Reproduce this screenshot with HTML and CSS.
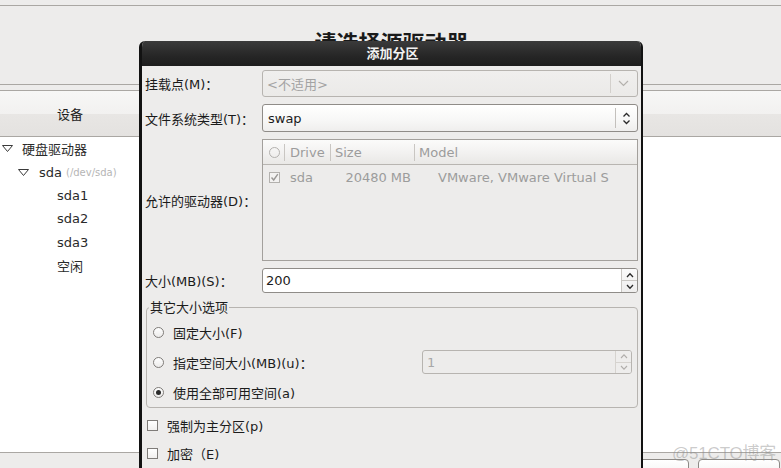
FILE: index.html
```html
<!DOCTYPE html>
<html lang="zh-CN">
<head>
<meta charset="utf-8">
<title>添加分区</title>
<link rel="stylesheet" href="styles.css">
</head>
<body>
<div class="page">
  <div class="topline"></div>
  <div class="heading">请选择源驱动器</div>
  <div class="tree">
    <div class="tree-head"><div class="col-device">设备</div></div>
    <div class="tree-body">
      <div class="row lvl0"><svg class="tri" width="11" height="7" viewBox="0 0 11 7"><path d="M0.5 0.5 H10.5 L5.5 6.5 Z" fill="none" stroke="#3a3a3a" stroke-width="1"/></svg><span>硬盘驱动器</span></div>
      <div class="row lvl1"><svg class="tri" width="11" height="7" viewBox="0 0 11 7"><path d="M0.5 0.5 H10.5 L5.5 6.5 Z" fill="none" stroke="#3a3a3a" stroke-width="1"/></svg><span>sda</span><span class="devpath">(/dev/sda)</span></div>
      <div class="row lvl2">sda1</div>
      <div class="row lvl2">sda2</div>
      <div class="row lvl2">sda3</div>
      <div class="row lvl2">空闲</div>
    </div>
  </div>
  <div class="buttons">
    <div class="btn b1">返回(B)</div>
    <div class="btn b2">下一步(N)</div>
  </div>
</div>

<div class="watermark">@51CTO博客</div>

<div class="dialog">
  <div class="titlebar">添加分区</div>
  <div class="dbody">
    <div class="form">
      <div class="lbl">挂载点(M)：</div>
      <div class="combo is-disabled">
        <span class="ctext">&lt;不适用&gt;</span>
        <span class="cbtn wide"><svg width="11" height="7" viewBox="0 0 11 7"><path d="M1 1 L5.5 5.5 L10 1" fill="none" stroke="#b4b1ad" stroke-width="1.2"/></svg></span>
      </div>

      <div class="lbl">文件系统类型(T)：</div>
      <div class="combo">
        <span class="ctext">swap</span>
        <span class="cbtn"><svg width="9" height="13" viewBox="0 0 9 13"><path d="M1.5 4.5 L4.5 1.5 L7.5 4.5" fill="none" stroke="#2a2a2a" stroke-width="1.3"/><path d="M1.5 8.5 L4.5 11.5 L7.5 8.5" fill="none" stroke="#2a2a2a" stroke-width="1.3"/></svg></span>
      </div>

      <div class="lbl">允许的驱动器(D)：</div>
      <div class="drives">
        <div class="dhead">
          <div class="hc c0"><span class="hcircle"></span></div>
          <div class="hc c1">Drive</div>
          <div class="hc c2">Size</div>
          <div class="hc c3">Model</div>
        </div>
        <div class="drow">
          <div class="dc c0"><span class="dcheck"><svg width="9" height="9" viewBox="0 0 9 9"><path d="M1.5 4.5 L3.7 7 L7.8 1.2" fill="none" stroke="#9a9896" stroke-width="1.4"/></svg></span></div>
          <div class="dc c1">sda</div>
          <div class="dc c2 num">20480 MB</div>
          <div class="dc c3 model">VMware, VMware Virtual S</div>
        </div>
      </div>

      <div class="lbl">大小(MB)(S)：</div>
      <div class="spin">
        <span class="stext">200</span>
        <span class="sbtns">
          <span class="sb"><svg width="8" height="6" viewBox="0 0 8 6"><path d="M1 5 L4 1.8 L7 5" fill="none" stroke="#2a2a2a" stroke-width="1.3"/></svg></span>
          <span class="sb"><svg width="8" height="6" viewBox="0 0 8 6"><path d="M1 1 L4 4.2 L7 1" fill="none" stroke="#2a2a2a" stroke-width="1.3"/></svg></span>
        </span>
      </div>
    </div>

    <fieldset class="opts">
      <legend>其它大小选项</legend>
      <div class="opt"><span class="radio"></span><span>固定大小(F)</span></div>
      <div class="opt">
        <span class="radio"></span><span>指定空间大小(MB)(u)：</span>
        <div class="spin small is-disabled">
          <span class="stext mono">1</span>
          <span class="sbtns">
            <span class="sb"><svg width="8" height="6" viewBox="0 0 8 6"><path d="M1 5 L4 1.8 L7 5" fill="none" stroke="#b0adaa" stroke-width="1.1"/></svg></span>
            <span class="sb"><svg width="8" height="6" viewBox="0 0 8 6"><path d="M1 1 L4 4.2 L7 1" fill="none" stroke="#b0adaa" stroke-width="1.1"/></svg></span>
          </span>
        </div>
      </div>
      <div class="opt"><span class="radio on"></span><span>使用全部可用空间(a)</span></div>
    </fieldset>

    <div class="check first"><span class="box"></span><span>强制为主分区(p)</span></div>
    <div class="check"><span class="box"></span><span>加密（E)</span></div>
  </div>
</div>
</body>
</html>
```

FILE: styles.css
```css
html, body {
  margin: 0;
  padding: 0;
  width: 781px;
  height: 468px;
  overflow: hidden;
}

body {
  position: relative;
  background: #edeceb;
  font-family: "DejaVu Sans", "Noto Sans CJK SC", sans-serif;
  font-size: 13px;
  color: #1c1c1c;
}

.page {
  height: 468px;
  overflow: hidden;
}

.topline {
  height: 5px;
  border-bottom: 1px solid #aaa7a3;
}

.heading {
  height: 53px;
  padding-top: 25px;
  border-bottom: 1px solid #aaa7a3;
  text-align: center;
  font-size: 22px;
  line-height: 26px;
  font-weight: bold;
  color: #1a1a1a;
  padding-left: 2px;
}

.tree {
  margin-top: 5px;
  border-top: 1px solid #aaa7a3;
}

.tree-head {
  height: 45px;
  border-bottom: 1px solid #aaa7a3;
  background: linear-gradient(#f7f7f6 0%, #f2f1f0 50%, #e8e6e4 51%, #e4e2e0 100%);
  display: flex;
  align-items: center;
}

.col-device {
  width: 140px;
  text-align: center;
}

.tree-body {
  height: 315px;
  background: #ffffff;
  border-bottom: 1px solid #aaa7a3;
  padding-top: 0;
}

.row {
  height: 23.4px;
  display: flex;
  align-items: center;
  color: #2a2a2a;
}

.tri {
  flex: none;
  margin-right: 9px;
}

.lvl0 { padding-left: 2px; }
.lvl1 { padding-left: 18px; }
.lvl1 .tri { margin-right: 10px; }
.lvl2 { padding-left: 57px; }

.devpath {
  font-size: 10px;
  color: #b5b5b5;
  margin-left: 4px;
  margin-top: 1px;
}

.buttons {
  display: flex;
  justify-content: flex-end;
  gap: 9px;
  padding: 6px 1px 0 0;
}

.btn {
  height: 30px;
  box-sizing: border-box;
  border: 1px solid #8d8a86;
  border-radius: 4px;
  background: linear-gradient(#ffffff, #ebe9e7);
  display: flex;
  align-items: center;
  justify-content: center;
  padding-top: 14px;
}

.b1 { width: 91px; }
.b2 { width: 82px; }

.watermark {
  position: absolute;
  left: 672px;
  top: 439px;
  font-family: "Liberation Sans", "Noto Sans CJK SC", sans-serif;
  font-size: 17px;
  color: rgba(140, 140, 140, 0.45);
  letter-spacing: -0.2px;
}

/* dialog window */
.dialog {
  position: absolute;
  left: 139px;
  top: 41px;
  width: 499px;
  height: 440px;
  border-left: 3px solid #121212;
  border-right: 2px solid #121212;
  border-radius: 6px 6px 0 0;
  background: #edeceb;
  overflow: hidden;
}

.titlebar {
  height: 25px;
  background: linear-gradient(#3b3b3b, #262626 60%, #1d1d1d);
  color: #f2f2f2;
  font-weight: bold;
  font-size: 13px;
  line-height: 25px;
  text-align: center;
  padding-left: 2px;
}

.dbody {
  padding: 4px 3px 0 3px;
}

.form {
  display: grid;
  grid-template-columns: 117px 1fr;
  grid-template-rows: 27px 28px 122px 25px;
  row-gap: 7px;
}

.lbl {
  display: flex;
  align-items: center;
  white-space: nowrap;
  color: #1a1a1a;
}

.combo {
  display: flex;
  align-items: stretch;
  box-sizing: border-box;
  border: 1px solid #8f8c88;
  border-radius: 3px;
  background: linear-gradient(#ffffff, #f7f7f6 60%, #efeeed);
}

.combo.is-disabled {
  border-color: #b7b4b0;
  background: linear-gradient(#f0efee, #ebeae8);
  color: #a3a3a3;
}

.ctext {
  flex: 1;
  display: flex;
  align-items: center;
  padding-left: 5px;
}

.combo.is-disabled .ctext {
  padding-left: 4px;
}

.cbtn {
  width: 22px;
  display: flex;
  align-items: center;
  justify-content: center;
  position: relative;
}

.cbtn::before {
  content: "";
  position: absolute;
  left: 0;
  top: 3px;
  bottom: 3px;
  border-left: 1px solid #c3c0bc;
}

.cbtn.wide {
  width: 27px;
}

.combo.is-disabled .cbtn::before {
  border-left-color: #d3d0cc;
}

/* drives list */
.drives {
  box-sizing: border-box;
  border: 1px solid #a3a09c;
  background: #edeceb;
  color: #9c9c9c;
}

.dhead {
  display: flex;
  height: 24px;
  border-bottom: 1px solid #b8b5b1;
  background: linear-gradient(#fbfbfa, #f3f2f1 50%, #e9e8e6);
}

.hc {
  display: flex;
  align-items: center;
  margin: 4px 0 3px;
  border-right: 1px solid #c9c6c2;
}

.c0 { width: 21px; justify-content: center; }
.c1 { width: 40px; padding-left: 5px; }
.c2 { width: 79px; padding-left: 4px; }
.c3 { flex: 1; padding-left: 4px; border-right: none; }

.hcircle {
  width: 9px;
  height: 9px;
  border: 1px solid #b3b1ae;
  border-radius: 50%;
  margin-left: 1px;
}

.drow {
  display: flex;
  height: 24px;
}

.dc {
  display: flex;
  align-items: center;
}

.drow .c0 { width: 22px; }
.drow .c1 { width: 41px; }
.drow .c2 { width: 80px; padding-left: 0; padding-right: 4px; justify-content: flex-end; }
.drow .c3.model { padding-left: 23px; white-space: nowrap; overflow: hidden; }

.dcheck {
  width: 11px;
  height: 11px;
  box-sizing: border-box;
  border: 1px solid #b3b1ae;
  background: #f3f2f1;
  display: flex;
  align-items: center;
  justify-content: center;
  margin-left: 1px;
}

/* spin buttons */
.spin {
  display: flex;
  box-sizing: border-box;
  border: 1px solid #8f8c88;
  border-radius: 3px;
  background: #ffffff;
}

.stext {
  flex: 1;
  display: flex;
  align-items: center;
  padding-left: 3px;
}

.sbtns {
  width: 15px;
  display: flex;
  flex-direction: column;
  border-left: 1px solid #c9c6c2;
  background: linear-gradient(#fafafa, #efeeed);
  border-radius: 0 2px 2px 0;
}

.sb {
  flex: 1;
  display: flex;
  align-items: center;
  justify-content: center;
}

.sb + .sb {
  border-top: 1px solid #c9c6c2;
}

.spin.small {
  width: 210px;
  height: 24px;
  margin-left: auto;
  margin-right: 5px;
}

.spin.is-disabled {
  border-color: #b7b4b0;
  background: #edeceb;
  color: #a7a7a7;
}

.spin.is-disabled .sbtns {
  background: #eeedec;
  border-left-color: #d6d3cf;
}

.spin.is-disabled .sb + .sb {
  border-top-color: #d6d3cf;
}

.mono {
  font-family: "DejaVu Sans Mono", monospace;
  padding-left: 4px;
}

/* size options frame */
.opts {
  margin: 7px 0 0 1px;
  padding: 2px 0 0 0;
  border: 1px solid #b7b4b0;
  border-radius: 4px;
  min-width: 0;
}

.opts legend {
  padding: 0 1px;
  margin-left: 2px;
  line-height: 15px;
}

.opt {
  height: 30px;
  display: flex;
  align-items: center;
  padding-left: 6px;
  white-space: nowrap;
}

.radio {
  flex: none;
  width: 11px;
  height: 11px;
  box-sizing: border-box;
  border: 1px solid #7f7c79;
  border-radius: 50%;
  background: linear-gradient(#ffffff, #ecebea);
  margin-right: 9px;
  position: relative;
}

.radio.on::after {
  content: "";
  position: absolute;
  left: 2px;
  top: 2px;
  width: 5px;
  height: 5px;
  border-radius: 50%;
  background: #2a2a2a;
}

.check {
  height: 28px;
  display: flex;
  align-items: center;
  padding-left: 2px;
}

.check.first {
  margin-top: 3px;
}

.box {
  flex: none;
  width: 11px;
  height: 11px;
  box-sizing: border-box;
  border: 1px solid #7f7c79;
  background: linear-gradient(#ffffff, #f1f0ef);
  margin-right: 9px;
}
```
